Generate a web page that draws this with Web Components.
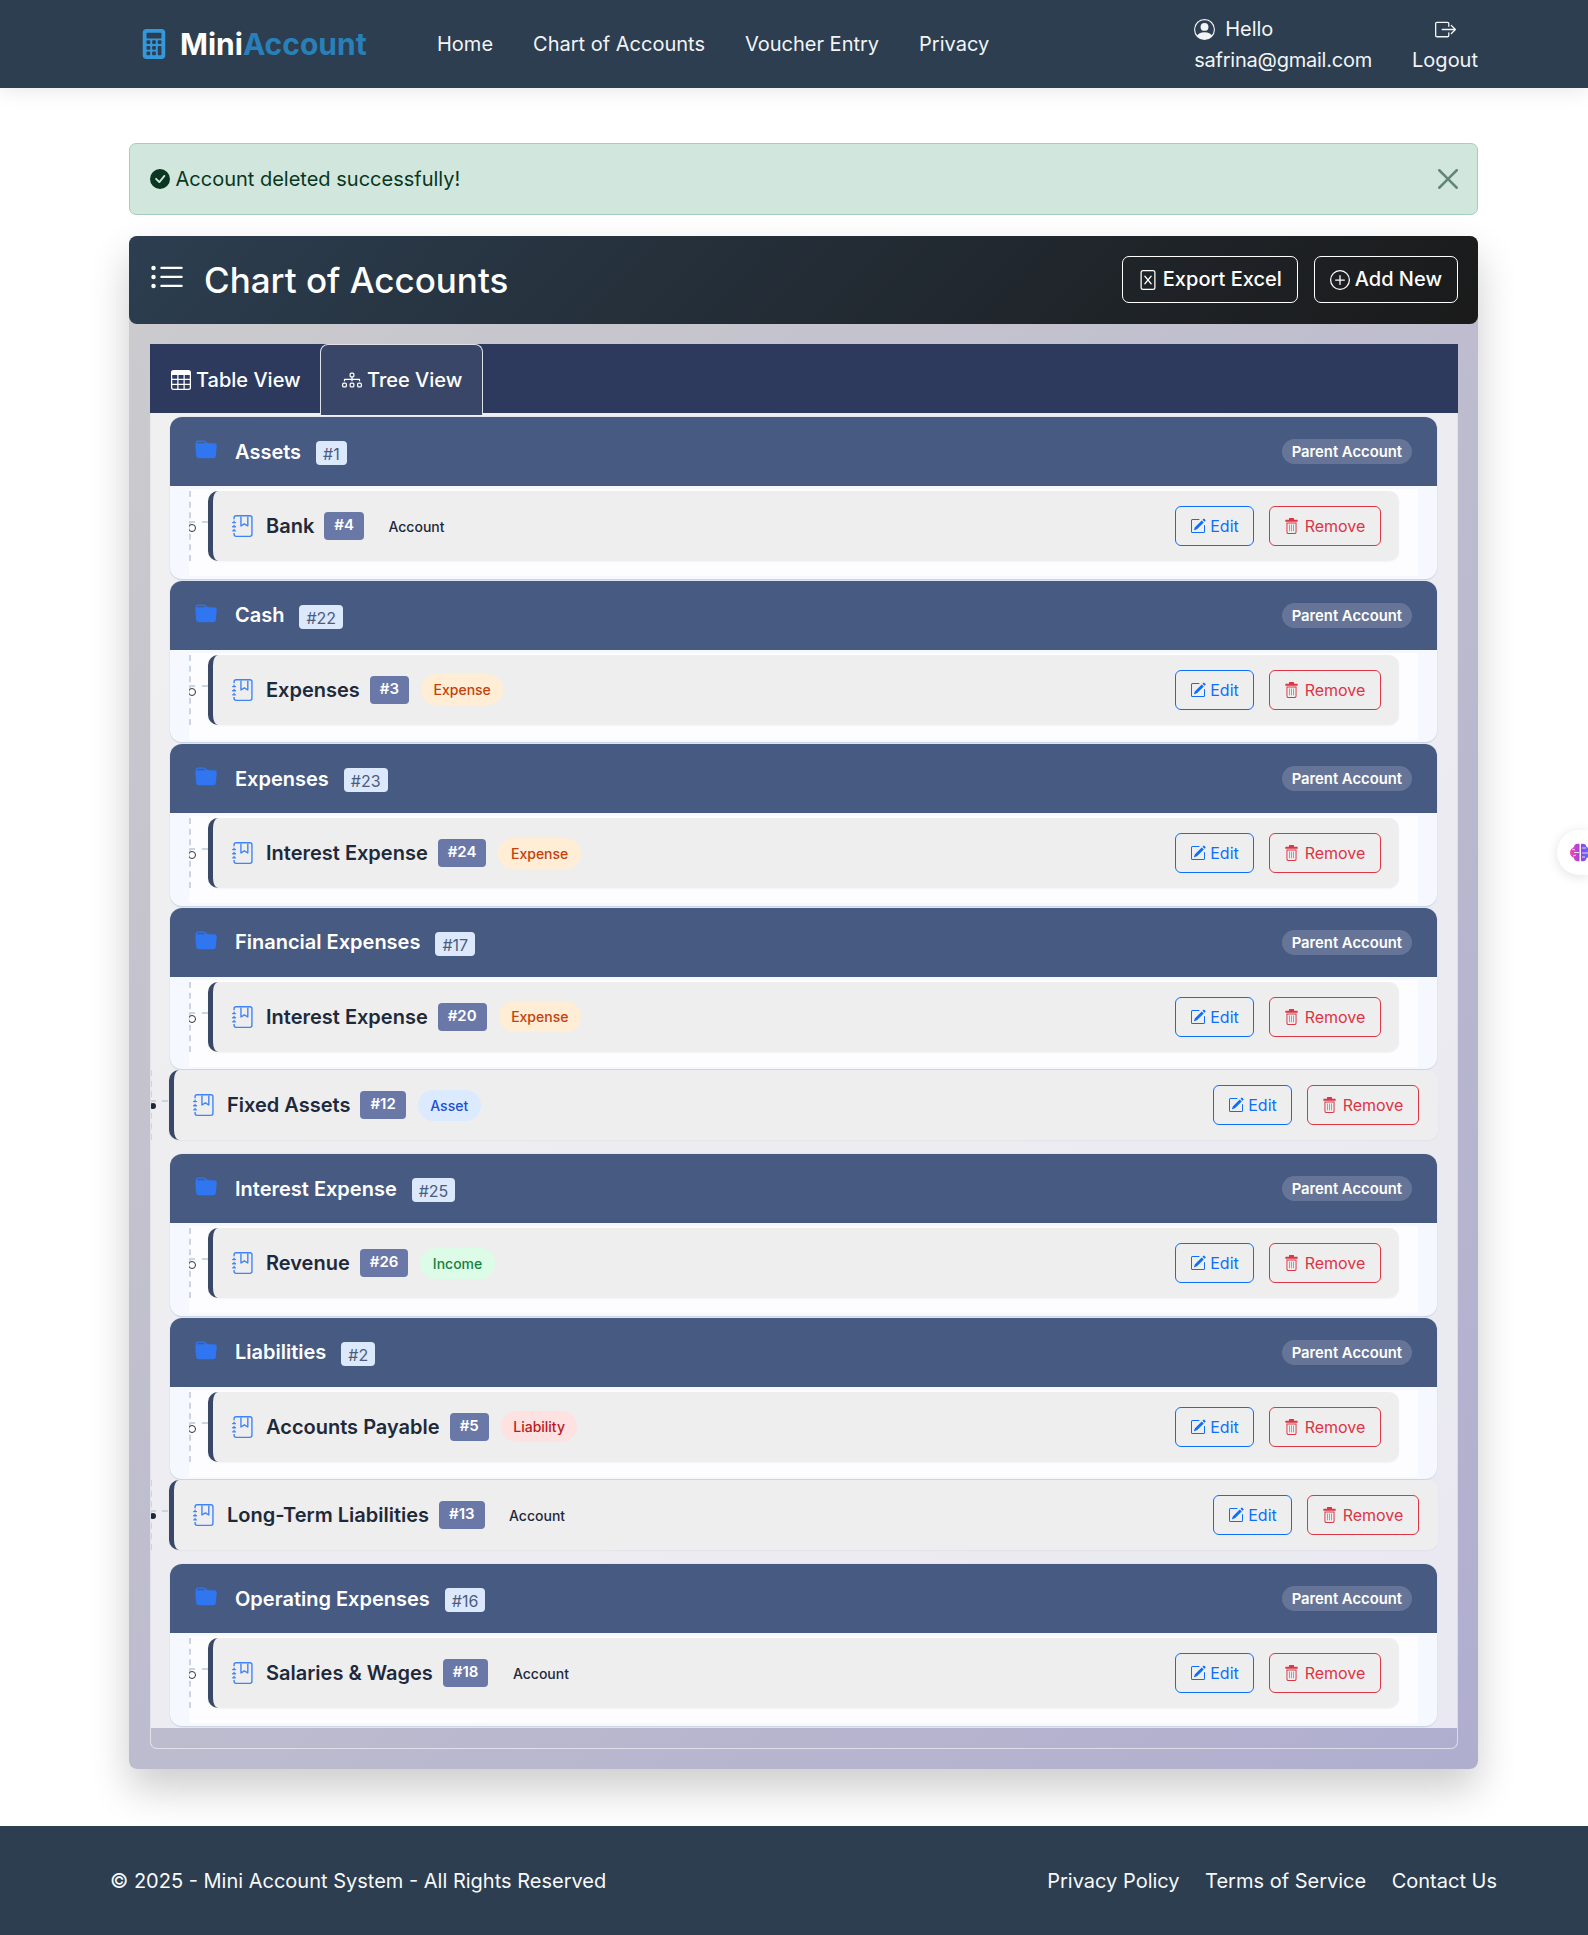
<!DOCTYPE html>
<html lang="en">
<head>
<meta charset="utf-8">
<title>Chart of Accounts</title>
<style>
  html,body{margin:0;padding:0;background:#fff}
  body{font-family:Inter,"Liberation Sans",sans-serif;font-size:20px;line-height:1.5;color:#212529;position:relative;overflow-x:hidden}
  main{display:block;padding:55px 110px 57px 129px}
</style>
</head>
<body>
<mini-nav></mini-nav>
<main>
  <flash-alert>Account deleted successfully!</flash-alert>
  <coa-card heading="Chart of Accounts">
    <tree-group name="Assets" code="#1"><tree-leaf nested name="Bank" code="#4" kind="Account"></tree-leaf></tree-group>
    <tree-group name="Cash" code="#22"><tree-leaf nested name="Expenses" code="#3" kind="Expense"></tree-leaf></tree-group>
    <tree-group name="Expenses" code="#23"><tree-leaf nested name="Interest Expense" code="#24" kind="Expense"></tree-leaf></tree-group>
    <tree-group name="Financial Expenses" code="#17"><tree-leaf nested name="Interest Expense" code="#20" kind="Expense"></tree-leaf></tree-group>
    <tree-leaf name="Fixed Assets" code="#12" kind="Asset"></tree-leaf>
    <tree-group name="Interest Expense" code="#25"><tree-leaf nested name="Revenue" code="#26" kind="Income"></tree-leaf></tree-group>
    <tree-group name="Liabilities" code="#2"><tree-leaf nested name="Accounts Payable" code="#5" kind="Liability"></tree-leaf></tree-group>
    <tree-leaf name="Long-Term Liabilities" code="#13" kind="Account"></tree-leaf>
    <tree-group name="Operating Expenses" code="#16"><tree-leaf nested name="Salaries &amp; Wages" code="#18" kind="Account"></tree-leaf></tree-group>
  </coa-card>
</main>
<site-footer></site-footer>
<float-widget></float-widget>
<script>
const ICONS = {
  calculator:'<path d="M2 2a2 2 0 0 1 2-2h8a2 2 0 0 1 2 2v12a2 2 0 0 1-2 2H4a2 2 0 0 1-2-2zm2 .5v2a.5.5 0 0 0 .5.5h7a.5.5 0 0 0 .5-.5v-2a.5.5 0 0 0-.5-.5h-7a.5.5 0 0 0-.5.5m0 4v1a.5.5 0 0 0 .5.5h1a.5.5 0 0 0 .5-.5v-1a.5.5 0 0 0-.5-.5h-1a.5.5 0 0 0-.5.5M4.5 9a.5.5 0 0 0-.5.5v1a.5.5 0 0 0 .5.5h1a.5.5 0 0 0 .5-.5v-1a.5.5 0 0 0-.5-.5zM4 12.5v1a.5.5 0 0 0 .5.5h1a.5.5 0 0 0 .5-.5v-1a.5.5 0 0 0-.5-.5h-1a.5.5 0 0 0-.5.5M7.5 6a.5.5 0 0 0-.5.5v1a.5.5 0 0 0 .5.5h1a.5.5 0 0 0 .5-.5v-1a.5.5 0 0 0-.5-.5zM7 9.5v1a.5.5 0 0 0 .5.5h1a.5.5 0 0 0 .5-.5v-1a.5.5 0 0 0-.5-.5h-1a.5.5 0 0 0-.5.5m.5 2.5a.5.5 0 0 0-.5.5v1a.5.5 0 0 0 .5.5h1a.5.5 0 0 0 .5-.5v-1a.5.5 0 0 0-.5-.5zM10 6.5v1a.5.5 0 0 0 .5.5h1a.5.5 0 0 0 .5-.5v-1a.5.5 0 0 0-.5-.5h-1a.5.5 0 0 0-.5.5m.5 2.5a.5.5 0 0 0-.5.5v4a.5.5 0 0 0 .5.5h1a.5.5 0 0 0 .5-.5v-4a.5.5 0 0 0-.5-.5z"/>',
  person:'<path d="M11 6a3 3 0 1 1-6 0 3 3 0 0 1 6 0"/><path fill-rule="evenodd" d="M0 8a8 8 0 1 1 16 0A8 8 0 0 1 0 8m8-7a7 7 0 0 0-5.468 11.37C3.242 11.226 4.805 10 8 10s4.757 1.225 5.468 2.37A7 7 0 0 0 8 1"/>',
  logout:'<path fill-rule="evenodd" d="M10 12.5a.5.5 0 0 1-.5.5h-8a.5.5 0 0 1-.5-.5v-9a.5.5 0 0 1 .5-.5h8a.5.5 0 0 1 .5.5v2a.5.5 0 0 0 1 0v-2A1.5 1.5 0 0 0 9.5 2h-8A1.5 1.5 0 0 0 0 3.5v9A1.5 1.5 0 0 0 1.5 14h8a1.5 1.5 0 0 0 1.5-1.5v-2a.5.5 0 0 0-1 0z"/><path fill-rule="evenodd" d="M15.854 8.354a.5.5 0 0 0 0-.708l-3-3a.5.5 0 0 0-.708.708L14.293 7.5H5.5a.5.5 0 0 0 0 1h8.793l-2.147 2.146a.5.5 0 0 0 .708.708z"/>',
  check:'<path d="M16 8A8 8 0 1 1 0 8a8 8 0 0 1 16 0m-3.97-3.03a.75.75 0 0 0-1.08.022L7.477 9.417 5.384 7.323a.75.75 0 0 0-1.06 1.06L6.97 11.03a.75.75 0 0 0 1.079-.02l3.992-4.99a.75.75 0 0 0-.01-1.05z"/>',
  close:'<path d="M.293.293a1 1 0 0 1 1.414 0L8 6.586 14.293.293a1 1 0 1 1 1.414 1.414L9.414 8l6.293 6.293a1 1 0 0 1-1.414 1.414L8 9.414l-6.293 6.293a1 1 0 0 1-1.414-1.414L6.586 8 .293 1.707a1 1 0 0 1 0-1.414"/>',
  list:'<path fill-rule="evenodd" d="M5 11.5a.5.5 0 0 1 .5-.5h9a.5.5 0 0 1 0 1h-9a.5.5 0 0 1-.5-.5m0-4a.5.5 0 0 1 .5-.5h9a.5.5 0 0 1 0 1h-9a.5.5 0 0 1-.5-.5m0-4a.5.5 0 0 1 .5-.5h9a.5.5 0 0 1 0 1h-9a.5.5 0 0 1-.5-.5m-3 1a1 1 0 1 0 0-2 1 1 0 0 0 0 2m0 4a1 1 0 1 0 0-2 1 1 0 0 0 0 2m0 4a1 1 0 1 0 0-2 1 1 0 0 0 0 2"/>',
  excel:'<path d="M5.18 4.616a.5.5 0 0 1 .704.064L8 7.219l2.116-2.54a.5.5 0 1 1 .768.641L8.651 8l2.233 2.68a.5.5 0 0 1-.768.64L8 8.781l-2.116 2.54a.5.5 0 0 1-.768-.641L7.349 8 5.116 5.32a.5.5 0 0 1 .064-.704"/><path d="M4 0a2 2 0 0 0-2 2v12a2 2 0 0 0 2 2h8a2 2 0 0 0 2-2V2a2 2 0 0 0-2-2zm0 1h8a1 1 0 0 1 1 1v12a1 1 0 0 1-1 1H4a1 1 0 0 1-1-1V2a1 1 0 0 1 1-1"/>',
  plus:'<path d="M8 15A7 7 0 1 1 8 1a7 7 0 0 1 0 14m0 1A8 8 0 1 0 8 0a8 8 0 0 0 0 16"/><path d="M8 4a.5.5 0 0 1 .5.5v3h3a.5.5 0 0 1 0 1h-3v3a.5.5 0 0 1-1 0v-3h-3a.5.5 0 0 1 0-1h3v-3A.5.5 0 0 1 8 4"/>',
  table:'<path d="M0 2a2 2 0 0 1 2-2h12a2 2 0 0 1 2 2v12a2 2 0 0 1-2 2H2a2 2 0 0 1-2-2zm15 2h-4v3h4zm0 4h-4v3h4zm0 4h-4v3h3a1 1 0 0 0 1-1zm-5 3v-3H6v3zm-5 0v-3H1v2a1 1 0 0 0 1 1zm-4-4h4V8H1zm0-4h4V4H1zm5-3v3h4V4zm4 4H6v3h4z"/>',
  tree:'<path fill-rule="evenodd" d="M6 3.5A1.5 1.5 0 0 1 7.5 2h1A1.5 1.5 0 0 1 10 3.5v1A1.5 1.5 0 0 1 8.5 6v1H14a.5.5 0 0 1 .5.5v1a.5.5 0 0 1-1 0V8h-5v.5a.5.5 0 0 1-1 0V8h-5v.5a.5.5 0 0 1-1 0v-1A.5.5 0 0 1 2 7h5.5V6A1.5 1.5 0 0 1 6 4.5zM8.5 5a.5.5 0 0 0 .5-.5v-1a.5.5 0 0 0-.5-.5h-1a.5.5 0 0 0-.5.5v1a.5.5 0 0 0 .5.5zM0 11.5A1.5 1.5 0 0 1 1.5 10h1A1.5 1.5 0 0 1 4 11.5v1A1.5 1.5 0 0 1 2.5 14h-1A1.5 1.5 0 0 1 0 12.5zm1.5-.5a.5.5 0 0 0-.5.5v1a.5.5 0 0 0 .5.5h1a.5.5 0 0 0 .5-.5v-1a.5.5 0 0 0-.5-.5zm4.5.5A1.5 1.5 0 0 1 7.5 10h1a1.5 1.5 0 0 1 1.5 1.5v1A1.5 1.5 0 0 1 8.5 14h-1A1.5 1.5 0 0 1 6 12.5zm1.5-.5a.5.5 0 0 0-.5.5v1a.5.5 0 0 0 .5.5h1a.5.5 0 0 0 .5-.5v-1a.5.5 0 0 0-.5-.5zm4.5.5a1.5 1.5 0 0 1 1.5-1.5h1a1.5 1.5 0 0 1 1.5 1.5v1a1.5 1.5 0 0 1-1.5 1.5h-1a1.5 1.5 0 0 1-1.5-1.5zm1.5-.5a.5.5 0 0 0-.5.5v1a.5.5 0 0 0 .5.5h1a.5.5 0 0 0 .5-.5v-1a.5.5 0 0 0-.5-.5z"/>',
  folder:'<path d="M9.828 3h3.982a2 2 0 0 1 1.992 2.181l-.637 7A2 2 0 0 1 13.174 14H2.825a2 2 0 0 1-1.991-1.819l-.637-7a2 2 0 0 1 .342-1.31L.5 3a2 2 0 0 1 2-2h3.672a2 2 0 0 1 1.414.586l.828.828A2 2 0 0 0 9.828 3m-8.322.12q.322-.119.684-.12h5.396l-.707-.707A1 1 0 0 0 6.172 2H2.5a1 1 0 0 0-1 .981z"/>',
  journal:'<path fill-rule="evenodd" d="M6 8V1h1v6.117L8.743 6.07a.5.5 0 0 1 .514 0L11 7.117V1h1v7a.5.5 0 0 1-.757.429L9 7.083 6.757 8.43A.5.5 0 0 1 6 8"/><path d="M3 0h10a2 2 0 0 1 2 2v12a2 2 0 0 1-2 2H3a2 2 0 0 1-2-2v-1h1v1a1 1 0 0 0 1 1h10a1 1 0 0 0 1-1V2a1 1 0 0 0-1-1H3a1 1 0 0 0-1 1v1H1V2a2 2 0 0 1 2-2"/><path d="M1 5v-.5a.5.5 0 0 1 1 0V5h.5a.5.5 0 0 1 0 1h-2a.5.5 0 0 1 0-1zm0 3v-.5a.5.5 0 0 1 1 0V8h.5a.5.5 0 0 1 0 1h-2a.5.5 0 0 1 0-1zm0 3v-.5a.5.5 0 0 1 1 0v.5h.5a.5.5 0 0 1 0 1h-2a.5.5 0 0 1 0-1z"/>',
  edit:'<path d="M15.502 1.94a.5.5 0 0 1 0 .706L14.459 3.69l-2-2L13.502.646a.5.5 0 0 1 .707 0l1.293 1.293zm-1.75 2.456-2-2L4.939 9.21a.5.5 0 0 0-.121.196l-.805 2.414a.25.25 0 0 0 .316.316l2.414-.805a.5.5 0 0 0 .196-.12l6.813-6.814z"/><path fill-rule="evenodd" d="M1 13.5A1.5 1.5 0 0 0 2.5 15h11a1.5 1.5 0 0 0 1.5-1.5v-6a.5.5 0 0 0-1 0v6a.5.5 0 0 1-.5.5h-11a.5.5 0 0 1-.5-.5v-11a.5.5 0 0 1 .5-.5H9a.5.5 0 0 0 0-1H2.5A1.5 1.5 0 0 0 1 2.5z"/>',
  trash:'<path d="M5.5 0h5a.6.6 0 0 1 .6.6V1.8H15a.6.6 0 0 1 .6.6v1.4H.4V2.4a.6.6 0 0 1 .6-.6h3.9V.6a.6.6 0 0 1 .6-.6"/><path fill-rule="evenodd" d="M1.8 4.5h12.4v9.6A1.9 1.9 0 0 1 12.3 16H3.7a1.9 1.9 0 0 1-1.9-1.9zm1.2 1v8.6c0 .4.3.8.7.8h8.6c.4 0 .7-.4.7-.8V5.500z"/><path opacity=".7" d="M5 6.500h1v6.800H5zm2.500 0h1v6.800h-1zm2.500 0h1v6.800h-1z"/>'
};
class UiIcon extends HTMLElement{
  connectedCallback(){
    if(this.shadowRoot) return;
    const s=this.getAttribute('size')||'16', h=this.getAttribute('height')||s;
    this.attachShadow({mode:'open'}).innerHTML=
      `<style>:host{display:inline-flex;flex:none;line-height:0}svg{display:block;fill:currentColor}</style>
       <svg xmlns="http://www.w3.org/2000/svg" width="${s}" height="${h}" viewBox="0 0 16 16" preserveAspectRatio="none" aria-hidden="true">${ICONS[this.getAttribute('name')]||''}</svg>`;
  }
}
customElements.define('ui-icon',UiIcon);

class MiniNav extends HTMLElement{
  constructor(){super();this.attachShadow({mode:'open'}).innerHTML=`
  <style>
    :host{display:block;position:relative;background:#2c3e50;box-shadow:0 2px 20px rgba(0,0,0,.1);color:#f2f4f6}
    nav{display:flex;align-items:center;height:88px;padding:0 110px 0 139px;box-sizing:border-box;white-space:nowrap}
    .brand{display:flex;align-items:center;gap:11px;font-size:30px;font-weight:700;color:#fff;line-height:1;width:298px}
    .brand b{font-weight:700;color:#2980b9}
    .brand ui-icon{color:#3498db}
    .links{display:flex;gap:40px;font-size:20px;flex:1}
    .user{display:flex;gap:40px;font-size:20px;line-height:30px;align-items:flex-start;align-self:flex-start;padding-top:13px}
    .user>div{display:flex;flex-direction:column}
    .hello{display:flex;align-items:center;gap:10px;height:32px}
    .mail{letter-spacing:-.22px}
    .out{align-items:center}
    .out .ic{height:32px;display:flex;align-items:center}
  </style>
  <nav>
    <div class="brand"><ui-icon name="calculator" size="30"></ui-icon><span>Mini<b>Account</b></span></div>
    <div class="links"><span>Home</span><span>Chart of Accounts</span><span>Voucher Entry</span><span>Privacy</span></div>
    <div class="user">
      <div><div class="hello"><ui-icon name="person" size="21"></ui-icon>Hello</div><span class="mail">safrina@gmail.com</span></div>
      <div class="out"><div class="ic"><ui-icon name="logout" size="21"></ui-icon></div><span>Logout</span></div>
    </div>
  </nav>`;}
}
customElements.define('mini-nav',MiniNav);

class FlashAlert extends HTMLElement{
  constructor(){super();this.attachShadow({mode:'open'}).innerHTML=`
  <style>
    :host{display:flex;align-items:center;height:72px;box-sizing:border-box;margin-bottom:21px;padding:0 19px 0 19.5px;
      background:#d1e7dd;border:1px solid #a3cfbb;border-radius:7px;color:#0a3622;font-size:20px}
    .t{flex:1;margin-left:6px}
    ui-icon.x{color:#0a3622;opacity:.55}
  </style>
  <ui-icon name="check" size="20"></ui-icon><span class="t"><slot></slot></span><ui-icon class="x" name="close" size="20"></ui-icon>`;}
}
customElements.define('flash-alert',FlashAlert);

class CoaCard extends HTMLElement{
  constructor(){super();this.attachShadow({mode:'open'}).innerHTML=`
  <style>
    :host{display:block;border-radius:8px;background:linear-gradient(135deg,#cccbcd 0%,#b0aecf 100%);box-shadow:0 20px 40px rgba(0,0,0,.2)}
    header{display:flex;align-items:center;height:88px;padding:0 20px 0 21px;border-radius:8px;color:#fff;
      background:linear-gradient(135deg,#2c3e50,#1a1a1a);position:relative}
    header .ic{margin-right:19px;margin-left:-1px;margin-top:-4px}
    h1{margin:0;flex:1;font-size:35px;font-weight:500;line-height:1.2}
    .hb{display:inline-flex;align-items:center;gap:5px;height:47px;margin-top:-1px;padding-bottom:2px;box-sizing:border-box;padding-left:15px;padding-right:15px;border:1px solid #fff;border-radius:7px;font-size:20px;font-weight:500;color:#fff;white-space:nowrap}
    .hb ui-icon{margin-top:2px}
    .hb+.hb{margin-left:16px}
    .body{padding:20px 20px 20px 21px}
    .tabs{display:flex;height:69px;background:#2d3a5e;color:#fff;font-size:20px;font-weight:500;white-space:nowrap}
    .tab{display:flex;align-items:center;gap:5px;padding:2px 21px 0;box-sizing:border-box}
    .tab.first{width:170px}
    .tab.on{width:163px;height:71px;background:#3a4668;border:1px solid #dee2e6;border-bottom:0;border-radius:8px 8px 0 0;position:relative;z-index:1;padding:0 21px 0}
    .content{border:1px solid rgba(255,255,255,.55);border-top:0;border-radius:0 0 7px 7px;padding-bottom:20px;margin:0}
    .tree{background:rgba(255,255,255,.72);padding:4px 20px .5px 19px;overflow:hidden}
  </style>
  <header>
    <ui-icon class="ic" name="list" size="36"></ui-icon>
    <h1>${this.getAttribute('heading')}</h1>
    <span class="hb"><ui-icon name="excel" size="20"></ui-icon>Export Excel</span>
    <span class="hb"><ui-icon name="plus" size="20"></ui-icon>Add New</span>
  </header>
  <div class="body">
    <div class="tabs">
      <div class="tab first"><ui-icon name="table" size="20"></ui-icon>Table View</div>
      <div class="tab on"><ui-icon name="tree" size="20"></ui-icon>Tree View</div>
    </div>
    <div class="content"><div class="tree"><slot></slot></div></div>
  </div>`;}
}
customElements.define('coa-card',CoaCard);

class TreeGroup extends HTMLElement{
  constructor(){super();this.attachShadow({mode:'open'}).innerHTML=`
  <style>
    :host{display:block;margin:0 0 1px 0;background:#f5f8fe;border-radius:12px;overflow:hidden;border-bottom:1px solid #ccd5e3;height:162.5px;box-sizing:border-box;box-shadow:0 0 0 .5px #d9e0ec}
    .head{display:flex;align-items:center;height:69px;padding:0 25px;box-sizing:border-box;background:#475a82;color:#fff}
    .head ui-icon{color:#3076f0;margin-top:-3px;margin-right:18px}
    .t{font-size:20px;font-weight:600;line-height:1}
    .c{margin-left:15px;height:24px;padding:0 7px;line-height:26px;background:#dce8fc;color:#4c5c7c;border-radius:4px;font-size:16px;margin-top:3px}
    .sp{flex:1}
    .p{height:25px;line-height:26px;padding:0 10px;border-radius:13px;background:rgba(255,255,255,.17);font-size:14.8px;font-weight:600}
    .ul{margin:3px 19px 0 19px;padding:2px 0 15px;background:#fdfdff;overflow:hidden;height:87px;box-sizing:border-box}
  </style>
  <div class="head"><ui-icon name="folder" size="22"></ui-icon><span class="t">${this.getAttribute('name')}</span><span class="c">${this.getAttribute('code')}</span><span class="sp"></span><span class="p">Parent Account</span></div>
  <div class="ul"><slot></slot></div>`;}
}
customElements.define('tree-group',TreeGroup);

const KINDS={Expense:['#ffedd5','#c2410c'],Asset:['#dbeafe','#1d4ed8'],Income:['#dcfce7','#15803d'],Liability:['#fee2e2','#b91c1c'],Account:['transparent','#1e293b']};
class TreeLeaf extends HTMLElement{
  constructor(){super();
    const k=KINDS[this.getAttribute('kind')]||KINDS.Account;
    this.attachShadow({mode:'open'}).innerHTML=`
  <style>
    :host{display:block;position:relative;height:70px;box-sizing:border-box;margin:-1px -1px 14px -1px;background:#eee;border-left:5px solid #3a4868;border-radius:10px;box-shadow:0 1px 2px rgba(0,0,0,.04)}
    :host([nested]){margin:0 19px 0 19px}
    .row{display:flex;align-items:center;height:100%;padding:0 19px 0 19px}
    :host([nested]) .row{padding-right:18px}
    .ic{color:#3f83f8;margin-right:12px}
    .n{font-size:20px;font-weight:600;color:#1e293b;line-height:1}
    .c{margin-left:10px;height:28px;line-height:26px;padding:0 10px;background:#6a78a8;color:#fff;border-radius:4px;font-size:15px;font-weight:600}
    .k{margin-left:12px;height:31px;line-height:31px;padding:0 12.500px;border-radius:16px;font-size:14px;font-weight:500;background:${k[0]};color:${k[1]}}
    .sp{flex:1}
    .b{display:inline-flex;align-items:center;height:40px;box-sizing:border-box;padding:0 12px;border:1px solid;border-radius:6px;font-size:16px}
    .e{color:#0d6efd;width:79px;justify-content:center;gap:4px}
    .r{color:#dc3545;margin-left:15px;width:112px;justify-content:center;gap:7px}
    .v{position:absolute;left:-24px;top:0;bottom:0;border-left:2px dashed #cbd5e1}
    .h{position:absolute;left:-24px;width:18px;top:30px;border-top:2px dashed #cbd5e1}
    .d{position:absolute;left:-24px;top:33px;width:6px;height:6px;border-radius:50%;box-sizing:border-box;background:#1e293b}
    :host([nested]) .d{left:-25px;width:8px;height:8px;background:#fff;border:1.500px solid #333}
    :host([nested]) .h{width:19px}
  </style>
  <span class="v"></span><span class="h"></span><span class="d"></span>
  <div class="row">
    <ui-icon class="ic" name="journal" size="22"></ui-icon>
    <span class="n">${this.getAttribute('name').replace('&','&amp;')}</span>
    <span class="c">${this.getAttribute('code')}</span>
    <span class="k">${this.getAttribute('kind')}</span>
    <span class="sp"></span>
    <span class="b e"><ui-icon name="edit" size="16"></ui-icon>Edit</span>
    <span class="b r"><ui-icon name="trash" size="13" height="16"></ui-icon>Remove</span>
  </div>`;}
}
customElements.define('tree-leaf',TreeLeaf);

class SiteFooter extends HTMLElement{
  constructor(){super();this.attachShadow({mode:'open'}).innerHTML=`
  <style>
    :host{display:flex;align-items:center;justify-content:space-between;height:109px;padding:1px 91px 0 110px;box-sizing:border-box;background:#2c3e50;color:#f8f9fa;font-size:20px}
    .l{display:flex;gap:25.5px}
  </style>
  <span>© 2025 - Mini Account System - All Rights Reserved</span>
  <div class="l"><span>Privacy Policy</span><span>Terms of Service</span><span>Contact Us</span></div>`;}
}
customElements.define('site-footer',SiteFooter);

class FloatWidget extends HTMLElement{
  constructor(){super();this.attachShadow({mode:'open'}).innerHTML=`
  <style>
    :host{position:absolute;right:0;top:830px;width:31px;height:45px;background:#fff;border-radius:23px 0 0 23px;box-shadow:0 2px 12px rgba(0,0,0,.12);overflow:hidden}
    svg{position:absolute;left:13px;top:12px}
  </style>
  <svg width="21" height="21" viewBox="0 0 21 21">
    <defs><linearGradient id="g" x1="0" y1="0" x2="1" y2="0"><stop offset="0" stop-color="#f04fa8"/><stop offset=".5" stop-color="#a23be8"/><stop offset="1" stop-color="#3b82f6"/></linearGradient></defs>
    <path fill="url(#g)" d="M9.500 2C6 1 4 3 4 5 1.500 6 0 8 0 10.500S1.500 15 4 16c0 2 2 4 5.500 3zM11 2c3.500-1 5.500 1 5.500 3C19 6 21 8 21 10.500S19 15 16.500 16c0 2-2 4-5.500 3z"/>
    <path fill="none" stroke="#fff" stroke-width=".8" d="M4 10.500h5M2 7l3 1M3 14l3-1M12 6h4M12 11h6M12 15h3"/>
  </svg>`;}
}
customElements.define('float-widget',FloatWidget);
</script>
</body>
</html>
